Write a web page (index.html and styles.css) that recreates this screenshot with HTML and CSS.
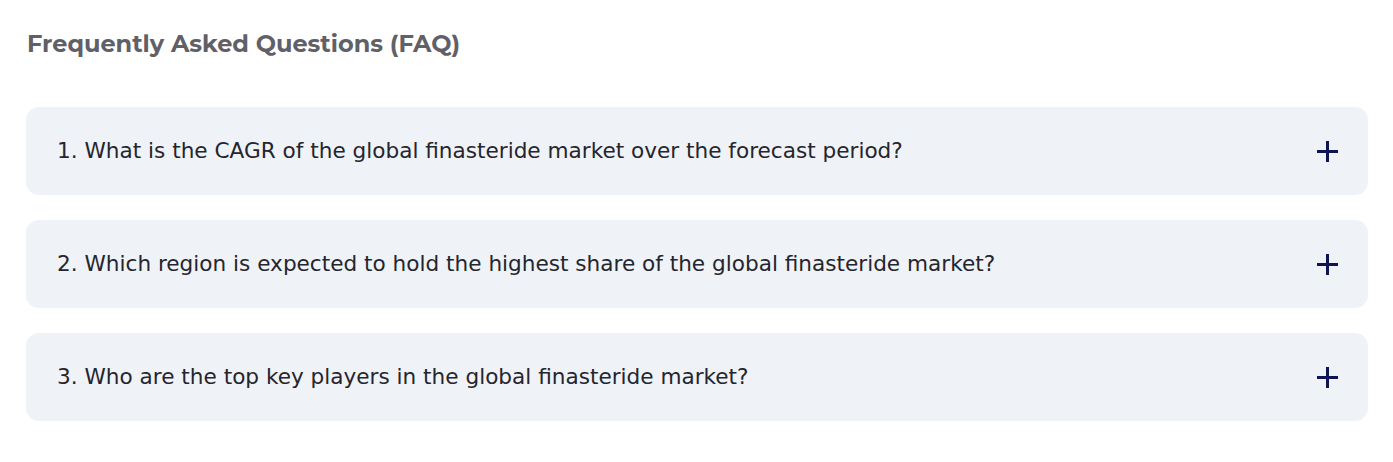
FILE: index.html
```html
<!DOCTYPE html>
<html lang="en">
<head>
<meta charset="utf-8">
<title>FAQ</title>
<link rel="stylesheet" href="styles.css">
</head>
<body>
<section class="faq">
  <h2 class="faq-title">Frequently Asked Questions (FAQ)</h2>
  <div class="faq-list">
    <div class="faq-item">
      <span class="faq-q">1. What is the CAGR of the global finasteride market over the forecast period?</span>
      <svg class="faq-icon" viewBox="0 0 21 21" width="21" height="21"><path d="M10.5 0V21M0 10.5H21" stroke="#0d1552" stroke-width="3" fill="none"/></svg>
    </div>
    <div class="faq-item">
      <span class="faq-q">2. Which region is expected to hold the highest share of the global finasteride market?</span>
      <svg class="faq-icon" viewBox="0 0 21 21" width="21" height="21"><path d="M10.5 0V21M0 10.5H21" stroke="#0d1552" stroke-width="3" fill="none"/></svg>
    </div>
    <div class="faq-item">
      <span class="faq-q">3. Who are the top key players in the global finasteride market?</span>
      <svg class="faq-icon" viewBox="0 0 21 21" width="21" height="21"><path d="M10.5 0V21M0 10.5H21" stroke="#0d1552" stroke-width="3" fill="none"/></svg>
    </div>
  </div>
</section>
</body>
</html>
```
FILE: styles.css
```css
html, body {
  margin: 0;
  padding: 0;
  background: #ffffff;
}
.faq {
  padding: 27px 25px 0 26px;
}
.faq-title {
  margin: 0 0 46px 1px;
  font-family: "Montserrat", "Open Sans", "Liberation Sans", sans-serif;
  font-weight: 700;
  font-size: 24px;
  line-height: 34px;
  color: #606066;
}
.faq-list {
  display: flex;
  flex-direction: column;
  gap: 25px;
}
.faq-item {
  display: flex;
  align-items: center;
  justify-content: space-between;
  height: 88px;
  box-sizing: border-box;
  padding: 0 30px 2px 31px;
  background: #eff2f7;
  border-radius: 13px;
}
.faq-q {
  font-family: "DejaVu Sans", sans-serif;
  font-size: 21.6px;
  color: #25252d;
}
.faq-icon {
  display: block;
  margin-top: 2px;
}
```
